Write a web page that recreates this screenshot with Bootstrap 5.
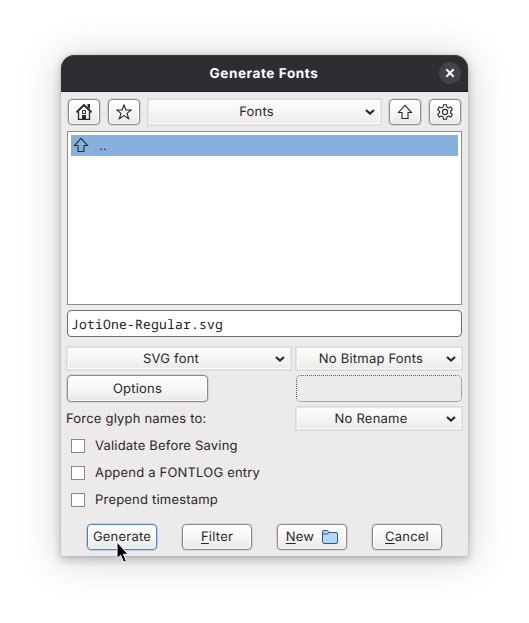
<!DOCTYPE html>
<html lang="en">
<head>
<meta charset="utf-8">
<meta name="viewport" content="width=device-width, initial-scale=1">
<title>Generate Fonts</title>
<link href="https://cdn.jsdelivr.net/npm/bootstrap@5.3.0/dist/css/bootstrap.min.css" rel="stylesheet">
<style>
body { min-height:100vh; padding:55px 0 0 61px; background:#fff; font-family:Inter,"Noto Sans",sans-serif; font-size:13px; line-height:18px; letter-spacing:.2px; text-rendering:geometricPrecision; color:#282828; overflow:hidden; }
button, input { text-rendering:inherit; }
.dialog { width:407px; height:501px; background:#ecebea; border-radius:14px 14px 0 0;
  box-shadow:0 0 2px rgba(0,0,0,.18), 0 3px 9px 1px rgba(0,0,0,.2), 0 3px 38px 5px rgba(0,0,0,.15); }
.titlebar { height:37px; background:#2e2d32; border-bottom:1px solid #1f1e22; border-radius:14px 14px 0 0; box-shadow:inset 0 1px #3f3e43; color:#fff; }
.titlebar h1 { font-size:13.5px; letter-spacing:.6px; line-height:18px; padding:1px 0 0 28px; }
.close-round { width:22px; height:22px; background:#434247; margin-right:7px; }
.push { height:27px; padding:0; border:1px solid #8b8a88; border-radius:4px; background:linear-gradient(#fefefe,#f8f8f7 45%,#e9e8e7); box-shadow:0 0 0 .6px rgba(120,120,118,.35), inset 0 0 0 1px rgba(255,255,255,.6); font-size:13px; line-height:18px; letter-spacing:.22px; color:#282828; }
.push.tool { width:32px; height:26px; padding:0; }
.push.action { width:70px; height:26px; padding-bottom:1px; }
.push.wide { width:141px; }
.push.default { border-color:#4a86cf; box-shadow:0 0 0 .6px rgba(74,134,207,.5), inset 0 0 0 1px rgba(255,255,255,.6); }
.push u { text-decoration-thickness:1px; text-underline-offset:2px; text-decoration-skip-ink:none; }
.picker { height:25px; padding:0 6px 0 0; border:1px solid #dcdbd9; border-radius:0; background:linear-gradient(#fdfdfd,#f6f6f5 45%,#eae9e8); box-shadow:inset 0 0 0 1px #e5e4e2, inset 0 0 0 2px #fafafa; font-size:13px; line-height:18px; letter-spacing:.22px; color:#282828; }
.picker.folder { width:235px; height:28px; }
.picker.format { width:226px; }
.picker.side { width:168px; }
.toolbar-row { padding:6px 7px 5px; height:39px; }
.file-list { height:174px; margin:0 6px; padding:3px; background:#fff; border:1px solid #8e8d8b; border-radius:0; }
.file-list .list-group-item { height:21px; padding:0 4px 1px 2px; background:#87b0dd; color:#282828; border:0; border-radius:0; }
.parent-name { margin-left:10px; padding-top:2px; }
.file-name { width:395px; height:27px; margin:5px 6px 9px; padding:1px 3px 0; border:1px solid #6f6e6c; border-radius:4px; font-family:"Noto Sans Mono","DejaVu Sans Mono",monospace; font-size:13px; letter-spacing:.2px; line-height:18px; color:#222; }
.file-name:focus { box-shadow:none; }
.format-row { padding:0 5px; }
.option-row { padding:4px 6px; }
.caption { padding-top:1px; }
.vacant { width:166px; height:27px; border:1px dotted #5f5e5c; border-radius:5px; }
.checks { padding:1px 10px 0; height:93px; }
.checks label { height:27px; }
.checks span { padding-top:1px; }
.checks .form-check-input { width:14px; height:14px; margin:0 10px 0 0; border:1px solid #868a8d; border-radius:0; }
.actions { padding:0 26px; }
.pointer { left:116px; top:541px; }
svg { display:block; flex:none; }
</style>
<script src="https://cdn.jsdelivr.net/npm/bootstrap@5.3.0/dist/js/bootstrap.bundle.min.js"></script>
</head>
<body>
<svg class="d-none">
  <symbol id="chevron" viewBox="0 0 10 8"><path d="M1 2l4 3.600L9 2" fill="none" stroke="#232b33" stroke-width="2.200"/></symbol>
  <symbol id="arrow" viewBox="0 0 16 16"><path d="M8 1.400L1.500 8.500h3.500v6h6v-6h3.500z" fill="none" stroke="#232b33" stroke-width="1.100"/></symbol>
</svg>
<main class="dialog">
  <header class="titlebar d-flex align-items-center">
    <h1 class="flex-grow-1 text-center fw-bold mb-0">Generate Fonts</h1>
    <span class="close-round rounded-circle d-flex align-items-center justify-content-center"><svg width="10" height="10" viewBox="0 0 10 10"><path d="M1.300 1.300l7.400 7.400M8.700 1.300L1.300 8.700" stroke="#fff" stroke-width="2"/></svg></span>
  </header>

  <div class="toolbar-row d-flex justify-content-between align-items-center">
    <div class="d-flex gap-2">
      <button class="btn push tool d-flex align-items-center justify-content-center" aria-label="Home"><svg width="16" height="16" viewBox="0 0 16 16"><path d="M.5 8.400L8 1l7.500 7.400" fill="none" stroke="#232b33" stroke-width="2"/><path d="M11.500 0h2.500v5l-2.500-2z" fill="#232b33"/><path d="M2.500 7.500v8h11v-8" fill="none" stroke="#232b33" stroke-width="1.300"/><path d="M6.500 6.500h3v3h-3z" fill="none" stroke="#232b33"/><path d="M6 11h4v5H6z" fill="#232b33"/></svg></button>
      <button class="btn push tool d-flex align-items-center justify-content-center" aria-label="Bookmarks"><svg width="16" height="16" viewBox="0 0 16 16"><path d="M8 1l1.900 5h5.300L11 9.400l1.600 5.300L8 11.600l-4.600 3.100L5 9.400.8 6h5.300z" fill="none" stroke="#232b33" stroke-width="1.100"/></svg></button>
    </div>
    <button class="btn picker folder d-flex align-items-center"><span class="flex-grow-1">Fonts</span><svg width="10" height="8"><use href="#chevron"/></svg></button>
    <div class="d-flex gap-2">
      <button class="btn push tool d-flex align-items-center justify-content-center" aria-label="Up"><svg width="16" height="16"><use href="#arrow"/></svg></button>
      <button class="btn push tool d-flex align-items-center justify-content-center" aria-label="Settings"><svg width="16" height="16" viewBox="0 0 16 16" fill="none" stroke="#232b33" stroke-width="1.100"><path d="M6.500.7h3l.5 2.500 1.500.8 2.300-1 1.500 2.700L13.500 7.300v1.400l1.800 1.600-1.500 2.700-2.300-1-1.500.8-.5 2.500h-3L6 12.800 4.500 12l-2.300 1L.7 10.300l1.800-1.600V7.300L.7 5.700 2.200 3l2.300 1L6 3.200z"/><circle cx="8" cy="8" r="2.600"/></svg></button>
    </div>
  </div>

  <div class="file-list list-group">
    <div class="list-group-item d-flex align-items-center"><svg width="16" height="16"><use href="#arrow"/></svg><span class="parent-name">..</span></div>
  </div>

  <input class="form-control file-name" type="text" value="JotiOne-Regular.svg" spellcheck="false" aria-label="File name">

  <div class="format-row d-flex justify-content-between">
    <button class="btn picker format d-flex align-items-center"><span class="flex-grow-1">SVG font</span><svg width="10" height="8"><use href="#chevron"/></svg></button>
    <button class="btn picker side d-flex align-items-center"><span class="flex-grow-1">No Bitmap Fonts</span><svg width="10" height="8"><use href="#chevron"/></svg></button>
  </div>
  <div class="option-row d-flex justify-content-between">
    <button class="btn push wide">Options</button>
    <div class="vacant"></div>
  </div>
  <div class="format-row d-flex justify-content-between align-items-center">
    <span class="caption">Force glyph names to:</span>
    <button class="btn picker side d-flex align-items-center"><span class="flex-grow-1">No Rename</span><svg width="10" height="8"><use href="#chevron"/></svg></button>
  </div>

  <div class="checks d-flex flex-column">
    <label class="d-flex align-items-center"><input class="form-check-input" type="checkbox"><span>Validate Before Saving</span></label>
    <label class="d-flex align-items-center"><input class="form-check-input" type="checkbox"><span>Append a FONTLOG entry</span></label>
    <label class="d-flex align-items-center"><input class="form-check-input" type="checkbox"><span>Prepend timestamp</span></label>
  </div>

  <footer class="actions d-flex justify-content-between">
    <button class="btn push action default">Generate</button>
    <button class="btn push action"><u>F</u>ilter</button>
    <button class="btn push action d-flex align-items-center justify-content-center gap-2"><span><u>N</u>ew</span><svg width="16" height="14" viewBox="0 0 16 14"><path d="M.5 11.500V2Q.5.500 2 .5h3.500L7 2.500h7Q15.500 2.500 15.500 4v8q0 1.500-1.500 1.500H2Q.5 13.500.5 11.500z" fill="#b4d6f7" stroke="#2457a4"/><path d="M1 4h4.500L7 2.500" fill="none" stroke="#2457a4"/></svg></button>
    <button class="btn push action"><u>C</u>ancel</button>
  </footer>
</main>
<svg class="pointer position-absolute" width="13" height="23" viewBox="0 0 13 23"><path d="M1 1v16.500l3.600-3.300 3 7 2.800-1.200-3-6.700h4.700z" fill="#000" stroke="#fff"/></svg>
</body>
</html>
